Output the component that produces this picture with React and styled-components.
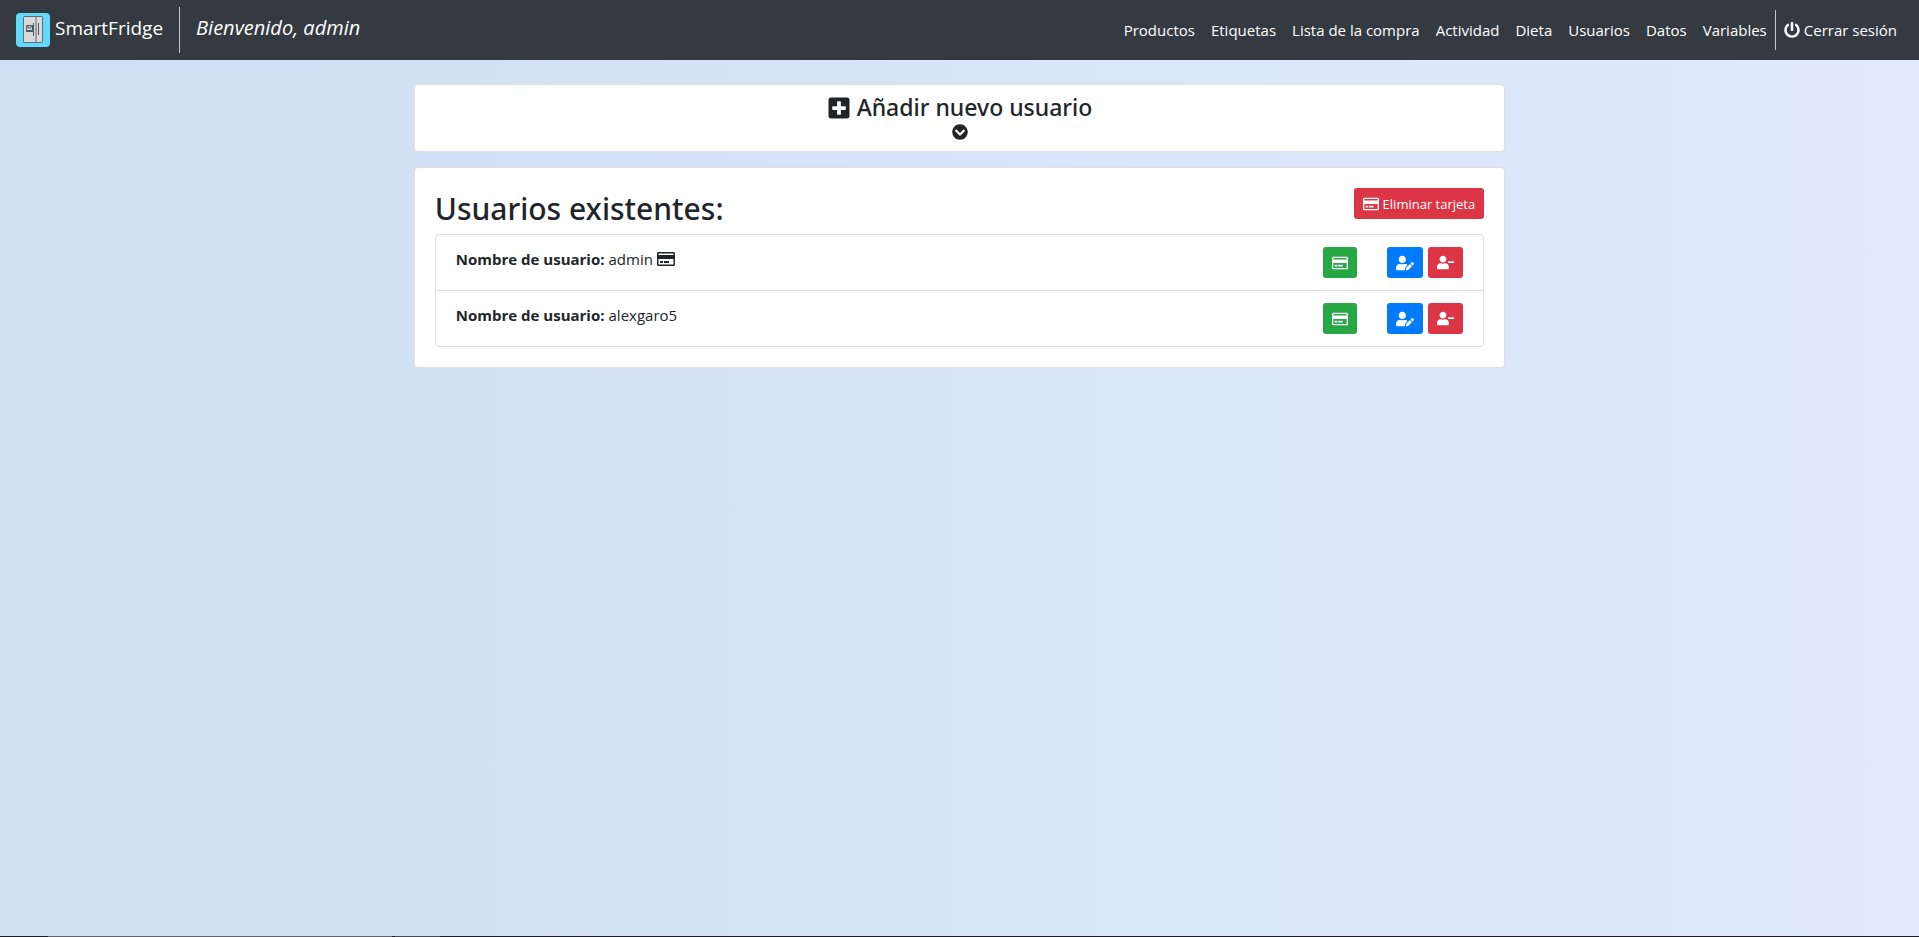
import React from "react";
import styled, { createGlobalStyle } from "styled-components";
import {
  FaPowerOff,
  FaPlusSquare,
  FaChevronCircleDown,
  FaRegCreditCard,
  FaUserEdit,
  FaUserMinus,
} from "react-icons/fa";

const GlobalStyle = createGlobalStyle`
  *, *::before, *::after { box-sizing: border-box; }
  body {
    margin: 0;
    min-height: 100vh;
    font-family: "Segoe UI", "Open Sans", "Noto Sans", sans-serif;
    font-size: 15px;
    line-height: 24px;
    color: #212529;
    background: linear-gradient(to right, #cfdef3, #e0eafc) fixed;
  }
`;

const Page = styled.div`
  min-height: 100vh;
  display: flex;
  flex-direction: column;
`;

const Navbar = styled.header`
  display: flex;
  justify-content: space-between;
  align-items: center;
  height: 60px;
  padding: 0 14px 0 16px;
  background: #343a40;
  color: #fff;
`;

const BrandGroup = styled.div`
  display: flex;
  align-items: center;
  height: 46px;
`;

const Brand = styled.a`
  display: flex;
  align-items: center;
  gap: 5px;
  height: 100%;
  padding-right: 16px;
  border-right: 1px solid #c4c6c8;
  color: inherit;
  text-decoration: none;
`;

const BrandName = styled.span`
  padding-bottom: 4px;
  font-size: 19px;
`;

const Welcome = styled.em`
  padding: 0 0 4px 16px;
  font-size: 20px;
`;

const Nav = styled.nav`
  display: flex;
  align-items: center;
`;

const NavLink = styled.a`
  display: flex;
  align-items: center;
  gap: 4px;
  height: 40px;
  padding: 0 8px;
  border-left: ${(p) => (p.$divided ? "1px solid #c4c6c8" : "0")};
  color: #fff;
  text-decoration: none;
`;

const Content = styled.main`
  flex: 1;
  display: flex;
  flex-direction: column;
  gap: 15px;
  width: calc(100% * 7 / 12);
  margin: 0 auto;
  padding: 24px 14px;
`;

const Card = styled.section`
  padding: ${(p) => (p.$compact ? "8px 20px" : "20px")};
  background: #fff;
  border: 1px solid #dfdfdf;
  border-radius: 4px;
`;

const Expander = styled.button`
  display: flex;
  flex-direction: column;
  align-items: center;
  gap: 2px;
  width: 100%;
  height: 50px;
  padding: 0;
  border: 0;
  background: none;
  color: inherit;
  font: inherit;
  cursor: pointer;
`;

const ExpanderTitle = styled.span`
  display: flex;
  align-items: center;
  gap: 6px;
  font-family: "Segoe UI", "Noto Sans", sans-serif;
  font-size: 23px;
  font-weight: 500;
  line-height: 29px;
`;

const CardHeader = styled.div`
  display: flex;
  justify-content: space-between;
  align-items: flex-start;
  margin-bottom: 5px;
`;

const Title = styled.h2`
  margin: 0;
  font-family: "Segoe UI", "Noto Sans", sans-serif;
  font-size: 30px;
  font-weight: 500;
  line-height: 41px;
`;

const colors = { green: "#28a745", blue: "#007bff", red: "#dc3545" };

const Button = styled.button`
  display: inline-flex;
  align-items: center;
  gap: 4px;
  height: 31px;
  padding: 0 9px;
  border: 0;
  border-radius: 3px;
  background: ${(p) => colors[p.$color]};
  color: #fff;
  font: inherit;
  font-size: 13px;
  cursor: pointer;
`;

const UserList = styled.ul`
  margin: 0;
  padding: 0;
  list-style: none;
  border: 1px solid #dfdfdf;
  border-radius: 4px;
`;

const UserRow = styled.li`
  display: flex;
  justify-content: space-between;
  align-items: flex-start;
  padding: 12px 20px;

  & + & {
    border-top: 1px solid #dfdfdf;
  }
`;

const UserName = styled.span`
  display: flex;
  align-items: center;
  gap: 4px;
`;

const Actions = styled.div`
  display: flex;
  gap: 30px;
`;

const ActionPair = styled.div`
  display: flex;
  gap: 5px;
`;

const BottomEdge = styled.footer`
  height: 1px;
  background: linear-gradient(
    to right,
    #1b1f27 48px,
    #62666b 48px 392px,
    #1b1f27 392px 395px,
    #474b52 395px 440px,
    #1b1f27 440px
  );
`;

const Logo = () => (
  <svg width="34" height="34" viewBox="0 0 34 34" aria-hidden="true">
    <rect width="34" height="34" rx="4" fill="#61dafb" />
    <rect x="7.5" y="3.5" width="19" height="26" rx="1" fill="#d9d9d9" stroke="#5b6e75" />
    <path d="M20 4v25" stroke="#98a3a7" strokeWidth="2" />
    <path d="M17.500 10v13M22.500 10v12M10.500 12.500h6v5h-6zM10 18.500h7M12 13v2h3v-2" fill="none" stroke="#455a64" />
  </svg>
);

const links = ["Productos", "Etiquetas", "Lista de la compra", "Actividad", "Dieta", "Usuarios", "Datos", "Variables"];
const users = [
  { name: "admin", hasCard: true },
  { name: "alexgaro5", hasCard: false },
];

export default function App() {
  return (
    <Page>
      <GlobalStyle />
      <Navbar>
        <BrandGroup>
          <Brand href="#">
            <Logo />
            <BrandName>SmartFridge</BrandName>
          </Brand>
          <Welcome>Bienvenido, admin</Welcome>
        </BrandGroup>
        <Nav>
          {links.map((label) => (
            <NavLink key={label} href="#">{label}</NavLink>
          ))}
          <NavLink href="#" $divided>
            <FaPowerOff size={16} />
            Cerrar sesión
          </NavLink>
        </Nav>
      </Navbar>
      <Content>
        <Card $compact>
          <Expander type="button">
            <ExpanderTitle>
              <FaPlusSquare size={24} />
              Añadir nuevo usuario
            </ExpanderTitle>
            <FaChevronCircleDown size={16} />
          </Expander>
        </Card>
        <Card>
          <CardHeader>
            <Title>Usuarios existentes:</Title>
            <Button type="button" $color="red">
              <FaRegCreditCard size={16} />
              Eliminar tarjeta
            </Button>
          </CardHeader>
          <UserList>
            {users.map((user) => (
              <UserRow key={user.name}>
                <UserName>
                  <strong>Nombre de usuario:</strong> {user.name}
                  {user.hasCard && <FaRegCreditCard size={18} />}
                </UserName>
                <Actions>
                  <Button type="button" $color="green" aria-label="Asignar tarjeta">
                    <FaRegCreditCard size={16} />
                  </Button>
                  <ActionPair>
                    <Button type="button" $color="blue" aria-label="Editar usuario">
                      <FaUserEdit size={18} />
                    </Button>
                    <Button type="button" $color="red" aria-label="Eliminar usuario">
                      <FaUserMinus size={17} />
                    </Button>
                  </ActionPair>
                </Actions>
              </UserRow>
            ))}
          </UserList>
        </Card>
      </Content>
      <BottomEdge />
    </Page>
  );
}
